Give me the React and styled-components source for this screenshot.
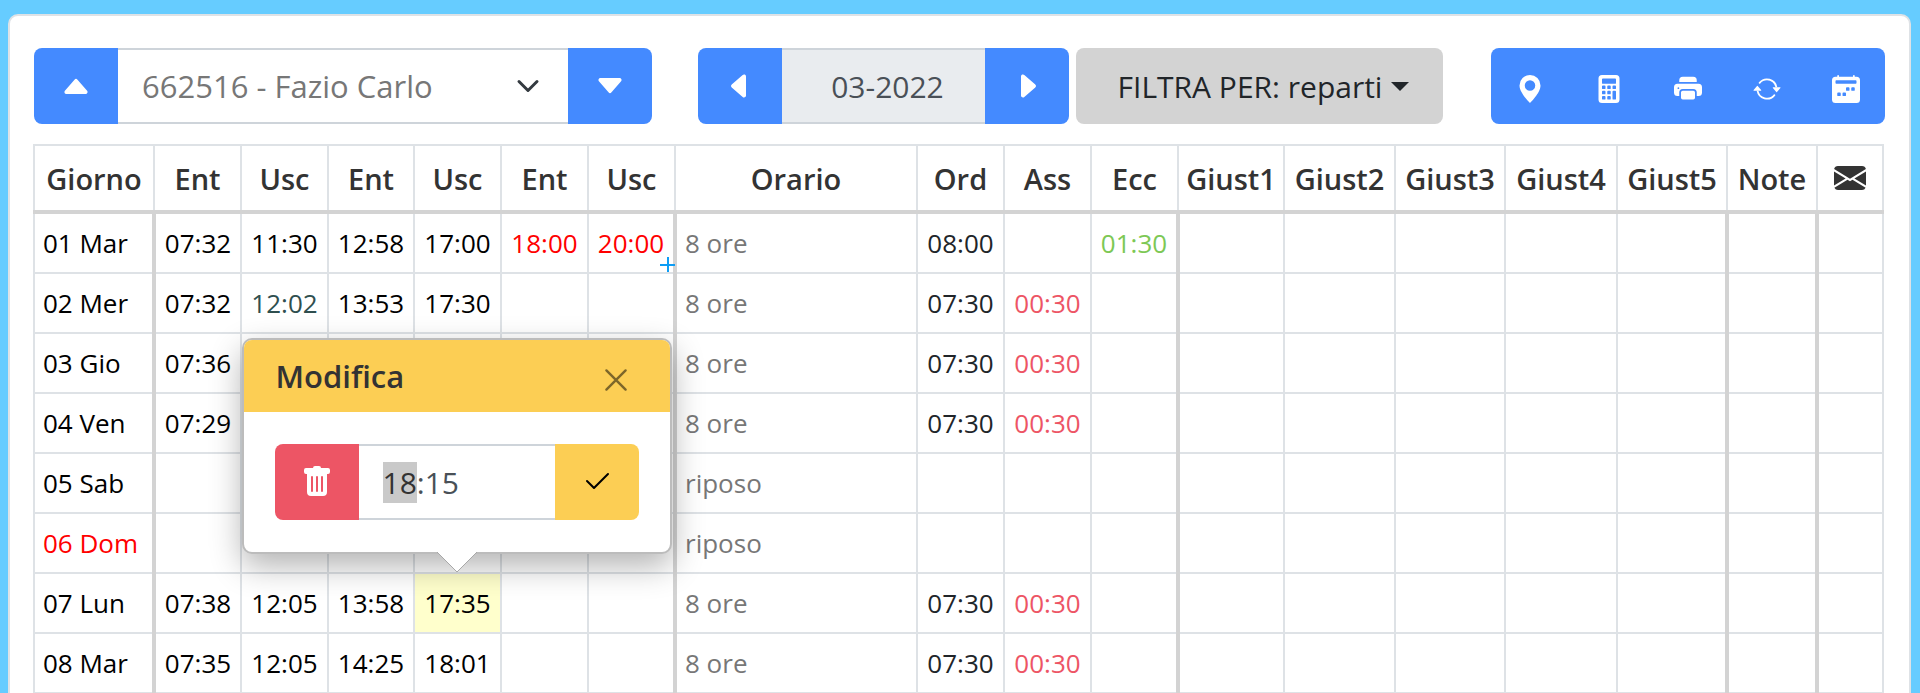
import React, { useEffect, useRef } from 'react';
import styled, { createGlobalStyle } from 'styled-components'
import {
	BsArrowRepeat,
	BsCalculatorFill,
	BsCalendar2WeekFill,
	BsCaretDownFill,
	BsCaretLeftFill,
	BsCaretRightFill,
	BsCaretUpFill,
	BsCheck2,
	BsEnvelopeFill,
	BsGeoAltFill,
	BsPrinterFill,
	BsTrashFill
} from 'react-icons/bs'

const GlobalStyle = createGlobalStyle`
* {
box-sizing: border-box;
}
body {
margin: 0;
background-color: #66ccff;
font-family: 'Open Sans', 'Noto Sans', sans-serif;
}
button, input, select {
font-family: inherit;
font-size: 30px;
}
`
const Pagina = styled.div`
height: 100vh;
overflow: hidden;
padding: 14px 9px 0 8px;
`
const Scheda = styled.main`
min-height: 100vh;
padding: 32px 24px;
border: 2px solid #dee2e6;
border-radius: 10px;
background-color: white;
`
const Barra = styled.div`
display: flex;
margin-bottom: 20px;
`
const Gruppo = styled.div`
display: flex;
height: 76px;
border-radius: 8px;
overflow: hidden;
`
const GruppoDipendente = styled(Gruppo)`
flex: 1;
margin-right: 46px;
`
const GruppoMese = styled(Gruppo)`
margin-right: 7px;
`
const Bottone = styled.button`
display: flex;
align-items: center;
justify-content: center;
flex: none;
width: ${props => props.$largo || 84}px;
padding: 0;
border: 0;
color: ${props => props.$testo || 'white'};
background-color: ${props => props.$sfondo || '#448aff'};
svg {
width: 32px;
height: 32px;
}
`
const GruppoAzioni = styled(Gruppo)`
width: 394px;
margin-left: 48px;
${Bottone} {
flex: 1;
padding-top: 6px;
}
svg {
width: 28px;
height: 28px;
}
`
const BottoneFiltro = styled(Bottone)`
height: 76px;
gap: 9px;
padding-left: 8px;
border-radius: 8px;
`
const Triangolo = styled.span`
border-top: 9px solid;
border-left: 9px solid transparent;
border-right: 9px solid transparent;
`
const Selettore = styled.div`
display: flex;
flex: 1;
position: relative;
svg {
position: absolute;
top: 26px;
right: 28px;
width: 24px;
height: 24px;
pointer-events: none;
}
`
const Tendina = styled.select`
flex: 1;
appearance: none;
padding: 0 24px;
border: solid #ced4da;
border-width: 2px 0;
border-radius: 0;
font-size: 31px;
color: #777;
background-color: white;
`
const Campo = styled.input`
flex: 1;
min-width: 0;
padding: 0 24px;
border: solid #ced4da;
border-width: 2px 0;
border-radius: 0;
outline: none;
color: #495057;
background-color: white;
&::selection {
color: #333;
background-color: rgba(200, 200, 200, 0.99);
}
`
const CampoMese = styled(Campo)`
flex: none;
width: 203px;
padding: 0 16px 0 24px;
text-align: center;
background-color: #e9ecef;
`
const Tabella = styled.table`
width: 100%;
margin-left: -1px;
table-layout: fixed;
border-collapse: collapse;
`
const Colonna = styled.col`
width: ${props => props.$largo ? props.$largo + 'px' : 'auto'};
`
const Intestazione = styled.th`
height: 67px;
padding: 0;
border: 2px solid #dee2e6;
border-bottom: 4px solid lightgray;
font-size: 29px;
font-weight: 600;
color: #333;
svg {
display: block;
width: 32px;
height: 32px;
margin: 0 auto;
}
`
const Cella = styled.td`
position: relative;
box-sizing: content-box;
height: 58px;
padding: 0 0 0 ${props => props.$sinistra ? 8 : 0}px;
border: 2px solid #dee2e6;
border-right: ${props => props.$stacco ? '4px solid lightgray' : '2px solid #dee2e6'};
font-size: 26px;
text-align: ${props => props.$sinistra ? 'left' : 'center'};
white-space: nowrap;
color: ${props => props.$colore || 'black'};
background-color: ${props => props.$attiva ? '#ffffcc' : 'transparent'};
`
const Maniglia = styled.svg`
position: absolute;
right: -2px;
bottom: 0;
width: 15px;
height: 15px;
stroke: #0d9df5;
stroke-width: 2;
`
const Riquadro = styled.div`
position: absolute;
z-index: 1;
bottom: calc(100% + 20px);
left: 50%;
width: 430px;
margin-left: -216px;
border: 2px solid #bcbcbc;
border-radius: 10px;
background-color: white;
box-shadow: 0 12px 32px rgba(0, 0, 0, 0.3);
`
const Titolo = styled.div`
display: flex;
align-items: center;
justify-content: space-between;
height: 72px;
padding: 0 42px 0 32px;
border-radius: 8px 8px 0 0;
font-size: 31px;
font-weight: 600;
color: #333;
background-color: #fcce54;
`
const Chiudi = styled.button`
display: flex;
padding: 8px 0 0;
border: 0;
background: none;
svg {
width: 24px;
height: 24px;
opacity: 0.5;
}
`
const Corpo = styled.div`
padding: 32px 31px;
`
const Freccia = styled.svg`
position: absolute;
top: calc(100% - 1px);
left: 50%;
width: 42px;
height: 22px;
margin-left: -21px;
`

const colonne = [
	{ nome: 'Giorno', largo: 120, stacco: true, sinistra: true },
	{ nome: 'Ent', largo: 87 },
	{ nome: 'Usc', largo: 87 },
	{ nome: 'Ent', largo: 86 },
	{ nome: 'Usc', largo: 87 },
	{ nome: 'Ent', largo: 87 },
	{ nome: 'Usc', largo: 87, stacco: true },
	{ nome: 'Orario', sinistra: true, colore: '#777' },
	{ nome: 'Ord', largo: 87, colore: '#212529' },
	{ nome: 'Ass', largo: 87, colore: '#ed5565' },
	{ nome: 'Ecc', largo: 87, colore: '#7dc855', stacco: true },
	{ nome: 'Giust1', largo: 106 },
	{ nome: 'Giust2', largo: 111 },
	{ nome: 'Giust3', largo: 110 },
	{ nome: 'Giust4', largo: 112 },
	{ nome: 'Giust5', largo: 110, stacco: true },
	{ nome: 'Note', largo: 90, stacco: true },
	{ nome: 'Messaggi', largo: 66, icona: <BsEnvelopeFill /> }
]

const giorni = [
	['01 Mar', '07:32', '11:30', '12:58', '17:00', '18:00', '20:00', '8 ore', '08:00', '', '01:30'],
	['02 Mer', '07:32', '12:02', '13:53', '17:30', '', '', '8 ore', '07:30', '00:30'],
	['03 Gio', '07:36', '', '', '', '', '', '8 ore', '07:30', '00:30'],
	['04 Ven', '07:29', '', '', '', '', '', '8 ore', '07:30', '00:30'],
	['05 Sab', '', '', '', '', '', '', 'riposo'],
	['06 Dom', '', '', '', '', '', '', 'riposo'],
	['07 Lun', '07:38', '12:05', '13:58', '17:35', '', '', '8 ore', '07:30', '00:30'],
	['08 Mar', '07:35', '12:05', '14:25', '18:01', '', '', '8 ore', '07:30', '00:30']
]

// riga-colonna
const coloriCelle = {
	'0-5': 'red',
	'0-6': 'red',
	'1-2': 'darkslategray',
	'5-0': 'red'
}

const azioni = [
	{ nome: 'Posizione', icona: <BsGeoAltFill /> },
	{ nome: 'Calcola', icona: <BsCalculatorFill /> },
	{ nome: 'Stampa', icona: <BsPrinterFill /> },
	{ nome: 'Aggiorna', icona: <BsArrowRepeat /> },
	{ nome: 'Calendario', icona: <BsCalendar2WeekFill /> }
]

function Modifica() {
	const ora = useRef(null)

	useEffect(() => {
		ora.current.focus({ preventScroll: true })
		ora.current.setSelectionRange(0, 2)
	}, [])

	return (
		<Riquadro role="dialog" aria-label="Modifica">
			<Titolo>
				<span>Modifica</span>
				<Chiudi aria-label="Chiudi">
					<svg viewBox="0 0 16 16" stroke="black" strokeWidth="1.6" strokeLinecap="round">
						<path d="M1.6 1.6 14.4 14.4M14.4 1.6 1.6 14.4" />
					</svg>
				</Chiudi>
			</Titolo>
			<Corpo>
				<Gruppo>
					<Bottone $sfondo="#ed5565" aria-label="Elimina"><BsTrashFill /></Bottone>
					<Campo ref={ora} aria-label="Ora" defaultValue="18:15" />
					<Bottone $sfondo="#fcce54" $testo="black" aria-label="Conferma"><BsCheck2 /></Bottone>
				</Gruppo>
			</Corpo>
			<Freccia viewBox="0 0 42 22">
				<path d="M0 0 21 21 42 0" fill="white" />
				<path d="M1 1 21 21 41 1" fill="none" stroke="#a8a8a8" />
			</Freccia>
		</Riquadro>
	)
}

function Giornata({ valori, riga }) {
	return (
		<tr>
			{colonne.map((colonna, i) => {
				const attiva = riga === 6 && i === 4
				return (
					<Cella
						key={i}
						$stacco={colonna.stacco}
						$sinistra={colonna.sinistra}
						$colore={coloriCelle[riga + '-' + i] || colonna.colore}
						$attiva={attiva}
					>
						{valori[i]}
						{riga === 0 && i === 6 && (
							<Maniglia viewBox="0 0 15 15"><path d="M0 8H15M8 0V15" /></Maniglia>
						)}
						{attiva && <Modifica />}
					</Cella>
				)
			})}
		</tr>
	)
}

function App() {
	return (
		<Pagina>
			<GlobalStyle />
			<Scheda>
				<Barra>
					<GruppoDipendente>
						<Bottone aria-label="Dipendente precedente"><BsCaretUpFill /></Bottone>
						<Selettore>
							<Tendina aria-label="Dipendente">
								<option>662516 - Fazio Carlo</option>
							</Tendina>
							<svg viewBox="0 0 16 16" fill="none" stroke="#343a40" strokeWidth="2" strokeLinecap="round" strokeLinejoin="round">
								<path d="m2 5 6 6 6-6" />
							</svg>
						</Selettore>
						<Bottone aria-label="Dipendente successivo"><BsCaretDownFill /></Bottone>
					</GruppoDipendente>
					<GruppoMese>
						<Bottone aria-label="Mese precedente"><BsCaretLeftFill /></Bottone>
						<CampoMese aria-label="Mese" readOnly value="03-2022" />
						<Bottone aria-label="Mese successivo"><BsCaretRightFill /></Bottone>
					</GruppoMese>
					<BottoneFiltro $largo={367} $sfondo="lightgray" $testo="#212529">
						FILTRA PER: reparti
						<Triangolo />
					</BottoneFiltro>
					<GruppoAzioni>
						{azioni.map(azione => (
							<Bottone key={azione.nome} aria-label={azione.nome}>{azione.icona}</Bottone>
						))}
					</GruppoAzioni>
				</Barra>
				<Tabella>
					<colgroup>
						{colonne.map((colonna, i) => <Colonna key={i} $largo={colonna.largo} />)}
					</colgroup>
					<thead>
						<tr>
							{colonne.map((colonna, i) => (
								<Intestazione key={i} aria-label={colonna.nome}>{colonna.icona || colonna.nome}</Intestazione>
							))}
						</tr>
					</thead>
					<tbody>
						{giorni.map((valori, riga) => <Giornata key={riga} valori={valori} riga={riga} />)}
					</tbody>
				</Tabella>
			</Scheda>
		</Pagina>
	)
}

export default App;
